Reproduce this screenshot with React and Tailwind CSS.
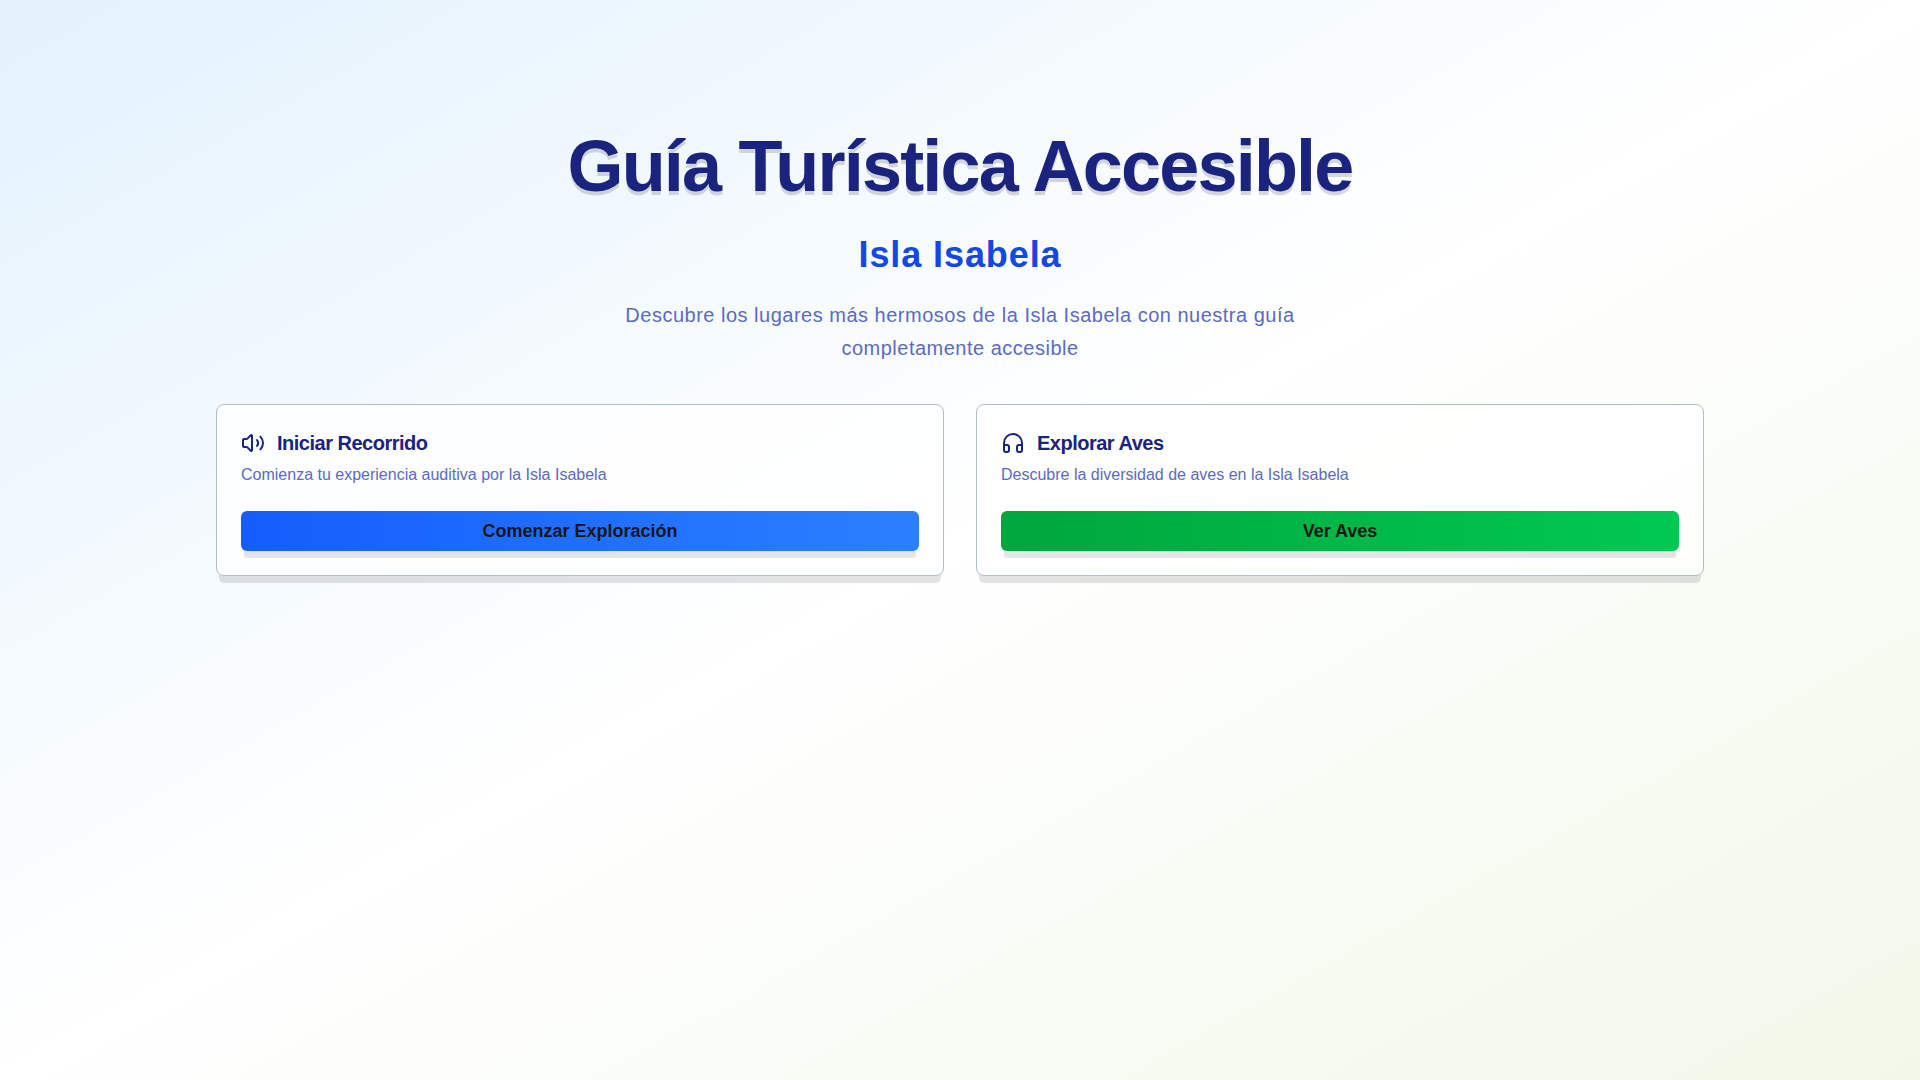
import { Volume2, Headphones } from "lucide-react";

const CARDS = [
  {
    title: "Iniciar Recorrido",
    description: "Comienza tu experiencia auditiva por la Isla Isabela",
    action: "Comenzar Exploración",
    icon: Volume2,
    gradient: "from-blue-600 to-blue-500"
  },
  {
    title: "Explorar Aves",
    description: "Descubre la diversidad de aves en la Isla Isabela",
    action: "Ver Aves",
    icon: Headphones,
    gradient: "from-green-600 to-green-500"
  }
];

function ActionCard({ title, description, action, icon: Icon, gradient }) {
  return (
    <div className="rounded-lg border border-[#b0bec5] bg-white/80 shadow-[0_10px_0_-3px_rgba(0,0,0,0.11)]">
      <div className="flex flex-col gap-1.5 p-6">
        <h3 className="flex items-center gap-3 text-xl leading-7 font-bold tracking-tight text-[#1a237e]">
          <Icon className="h-6 w-6" />
          {title}
        </h3>
        <p className="text-base leading-6 text-[#5c6bc0]">{description}</p>
      </div>
      <div className="px-6 pb-6">
        <button
          className={`h-10 w-full rounded-md bg-gradient-to-r text-lg font-bold text-[#171717] shadow-[0_10px_0_-3px_rgba(0,0,0,0.1)] ${gradient}`}
        >
          {action}
        </button>
      </div>
    </div>
  );
}

export default function App() {
  return (
    <div className="min-h-screen bg-[linear-gradient(to_bottom_right,#e3f2fd_0%,#ffffff_50%,#f1f8e9_100%)] font-['Liberation_Sans',Arial,sans-serif]">
      <main className="mx-auto max-w-[1536px] px-6 pt-[121px] pb-12">
        <header className="mb-10 text-center">
          <h1 className="mb-6 text-7xl leading-tight font-bold tracking-tight text-[#1a237e] [text-shadow:0_4px_0_rgba(0,0,0,0.15)]">
            Guía Turística Accesible
          </h1>
          <h2 className="mb-6 text-4xl font-bold tracking-wide text-blue-700">Isla Isabela</h2>
          <p className="mx-auto max-w-2xl text-xl leading-relaxed tracking-wide text-[#5c6bc0]">
            Descubre los lugares más hermosos de la Isla Isabela con nuestra guía completamente accesible
          </p>
        </header>
        <div className="grid grid-cols-1 gap-8 md:grid-cols-2">
          {CARDS.map((card) => (
            <ActionCard key={card.title} {...card} />
          ))}
        </div>
      </main>
    </div>
  );
}
